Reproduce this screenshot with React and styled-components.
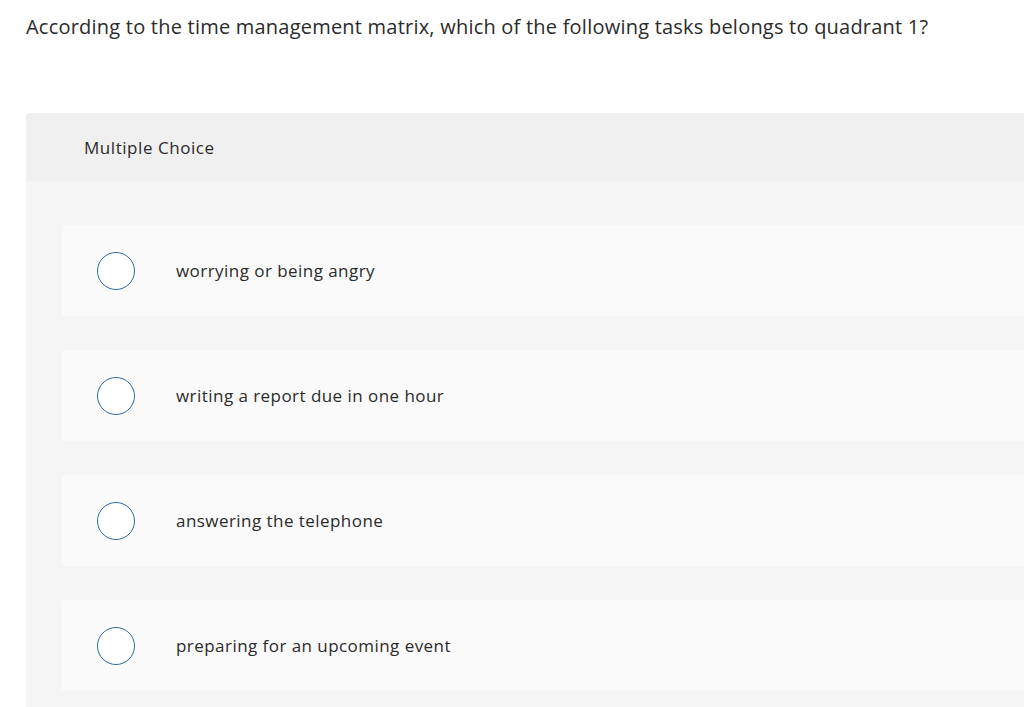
import React from 'react'
import styled, { createGlobalStyle } from 'styled-components'

const GlobalStyle = createGlobalStyle`
  html, body {
    margin: 0;
    padding: 0;
    background: #fff;
    overflow-x: hidden;
  }
  body {
    font-family: "Open Sans", "Liberation Sans", sans-serif;
    color: #333;
  }
`

const Page = styled.div`
  padding: 14px 0 0 26px;
`

const Question = styled.h1`
  margin: 0;
  font-size: 20px;
  font-weight: 400;
  line-height: 26px;
  letter-spacing: 0.22px;
  color: #2b2b2b;
`

const Panel = styled.section`
  margin-top: 73px;
  width: calc(100% + 40px);
  background: #f5f5f5;
  border-radius: 3px 0 0 0;
  overflow: hidden;
`

const PanelHeader = styled.div`
  height: 68px;
  display: flex;
  align-items: center;
  padding-left: 58px;
  background: #f0f0f0;
  font-size: 17px;
  letter-spacing: 0.55px;
  color: #2b2b2b;
`

const Choices = styled.ul`
  list-style: none;
  margin: 0;
  padding: 44px 0 16px 36px;
  display: flex;
  flex-direction: column;
  gap: 34px;
`

const Choice = styled.li`
  height: 91px;
  display: flex;
  align-items: center;
  background: #fafafa;
  border-radius: 3px;
  padding-left: 35px;
  cursor: pointer;
`

const Radio = styled.span`
  width: 36px;
  height: 36px;
  flex: none;
  border-radius: 50%;
  border: 1.5px solid #2f6aa1;
  background: #fff;
`

const Label = styled.span`
  margin-left: 41px;
  font-size: 17px;
  letter-spacing: 0.45px;
  color: #2b2b2b;
`

const options = [
  'worrying or being angry',
  'writing a report due in one hour',
  'answering the telephone',
  'preparing for an upcoming event',
]

export default function App() {
  return (
    <>
      <GlobalStyle />
      <Page>
        <Question>
          According to the time management matrix, which of the following tasks belongs to quadrant 1?
        </Question>
        <Panel>
          <PanelHeader>Multiple Choice</PanelHeader>
          <Choices>
            {options.map((o, i) => (
              <Choice key={i}>
                <Radio />
                <Label>{o}</Label>
              </Choice>
            ))}
          </Choices>
        </Panel>
      </Page>
    </>
  )
}
